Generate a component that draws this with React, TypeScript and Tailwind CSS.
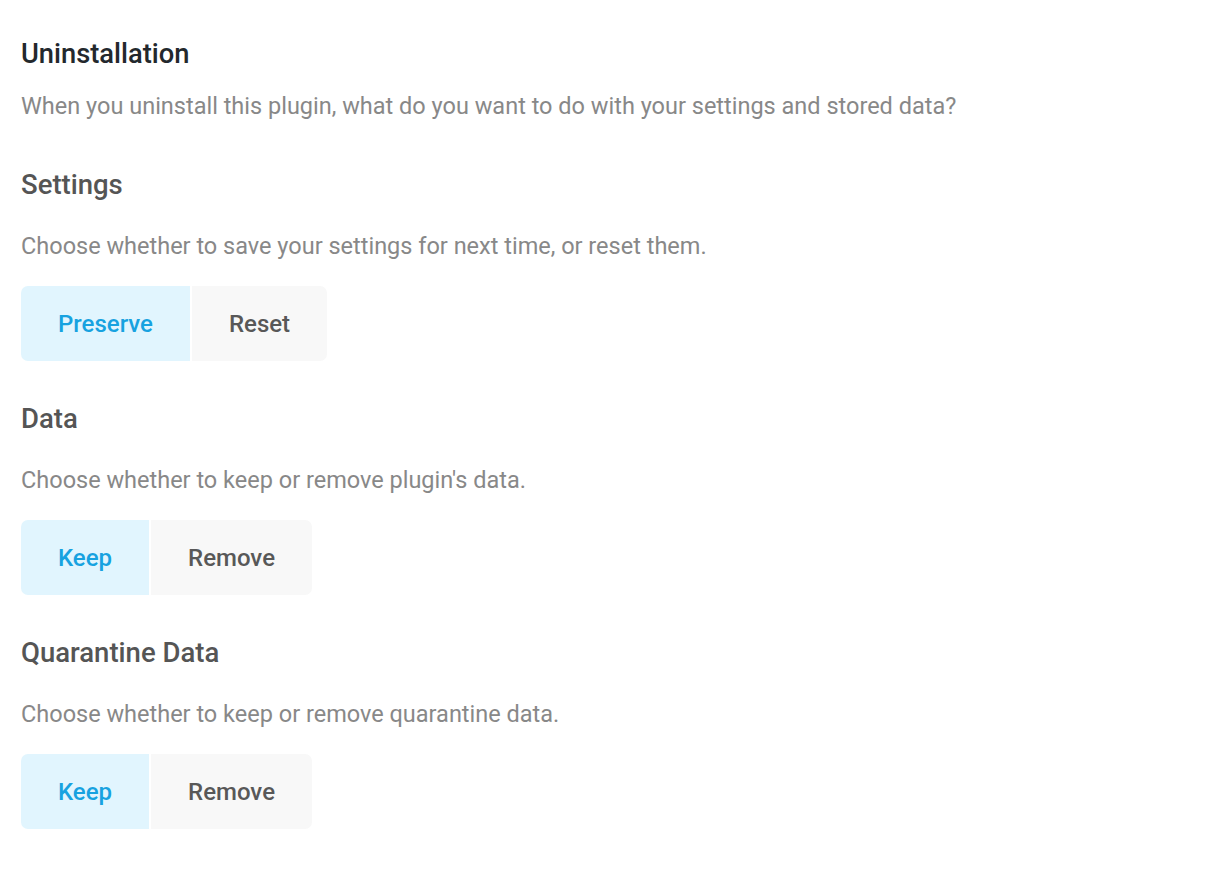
const font = { fontFamily: "Roboto, 'Noto Sans', sans-serif" };

type Opt = { label: string; active?: boolean };

function Toggle({ options }: { options: Opt[] }) {
  return (
    <div className="flex gap-[2px] mt-[26px]">
      {options.map((o, i) => (
        <button
          key={o.label}
          className={`h-[75px] px-[37px] text-[24px] font-medium ${
            o.active ? "bg-[#e1f5fe] text-[#17a2e0]" : "bg-[#f8f8f8] text-[#585858]"
          } ${i === 0 ? "rounded-l-[7px]" : ""} ${i === options.length - 1 ? "rounded-r-[7px]" : ""}`}
        >
          {o.label}
        </button>
      ))}
    </div>
  );
}

function Section({ title, desc, options }: { title: string; desc: string; options: Opt[] }) {
  return (
    <section className="mt-[42px] first:mt-[49px]">
      <h3 className="text-[27.5px] leading-[32px] font-medium text-[#555555]">{title}</h3>
      <p className="mt-[31px] text-[23.5px] leading-[28px] text-[#888888]">{desc}</p>
      <Toggle options={options} />
    </section>
  );
}

export default function App() {
  return (
    <div className="min-h-screen bg-white px-[21px] pt-[38px]" style={font}>
      <h2 className="text-[27.3px] leading-[32px] font-medium text-[#23282d]">Uninstallation</h2>
      <p className="mt-[22px] text-[23.5px] leading-[28px] text-[#888888]">
        When you uninstall this plugin, what do you want to do with your settings and stored data?
      </p>
      <div>
        <Section
          title="Settings"
          desc="Choose whether to save your settings for next time, or reset them."
          options={[{ label: "Preserve", active: true }, { label: "Reset" }]}
        />
        <Section
          title="Data"
          desc="Choose whether to keep or remove plugin's data."
          options={[{ label: "Keep", active: true }, { label: "Remove" }]}
        />
        <Section
          title="Quarantine Data"
          desc="Choose whether to keep or remove quarantine data."
          options={[{ label: "Keep", active: true }, { label: "Remove" }]}
        />
      </div>
    </div>
  );
}
